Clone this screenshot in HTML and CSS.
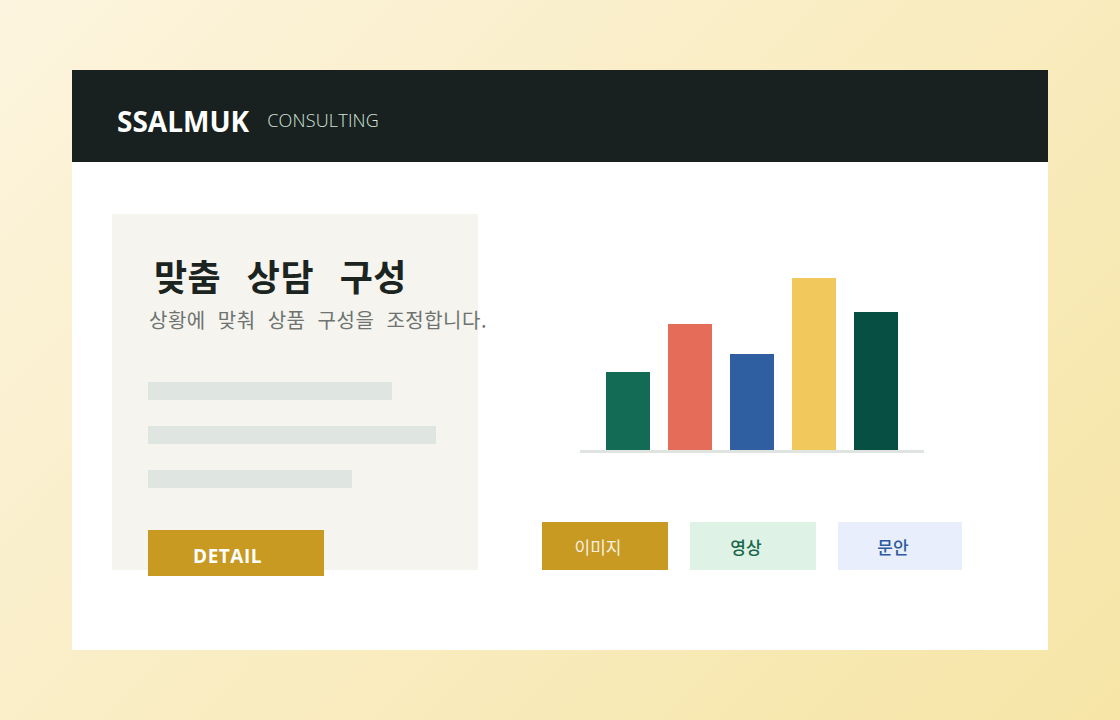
FILE: index.html
```html
<!DOCTYPE html>
<html lang="ko">
<head>
  <meta charset="UTF-8" />
  <title>SSALMUK Consulting</title>
  <link rel="stylesheet" href="styles.css">
</head>
<body>
  <div class="card">
    <header class="topbar">
      <h1 class="brand">SSALMUK</h1>
      <span class="tagline">CONSULTING</span>
    </header>
    <main class="content">
      <section class="panel">
        <h2 class="panel-title">맞춤 상담 구성</h2>
        <p class="panel-sub">상황에 맞춰 상품 구성을 조정합니다.</p>
        <div class="lines">
          <span class="line" style="width:244px"></span>
          <span class="line" style="width:288px"></span>
          <span class="line" style="width:204px"></span>
        </div>
        <a class="detail-btn" href="#">DETAIL</a>
      </section>
      <section class="side">
        <div class="chart">
          <span class="bar green" style="height:78px"></span>
          <span class="bar coral" style="height:126px"></span>
          <span class="bar blue" style="height:96px"></span>
          <span class="bar yellow" style="height:172px"></span>
          <span class="bar forest" style="height:138px"></span>
        </div>
        <div class="tabs">
          <button class="tab tab-image">이미지</button>
          <button class="tab tab-video">영상</button>
          <button class="tab tab-copy">문안</button>
        </div>
      </section>
    </main>
  </div>
</body>
</html>
```

FILE: styles.css
```css
/* Reset */
* {
  box-sizing: border-box;
  margin: 0;
  padding: 0;
}
body {
  font-family: "Open Sans", "Noto Sans CJK KR", sans-serif;
  background: linear-gradient(135deg, #fcf4de, #f6e5a6);
  min-height: 100vh;
  padding: 70px 72px;
}
.card {
  width: 976px;
  height: 580px;
  background: #fff;
}
/* Header bar */
.topbar {
  height: 92px;
  background: #182120;
  display: flex;
  align-items: center;
  padding: 8px 0 0 45px;
  gap: 18px;
}
.brand {
  color: #fff;
  font-size: 28px;
  font-weight: 700;
  line-height: 1;
  margin-top: 2px;
}
.tagline {
  color: #d3e4da;
  font-size: 18px;
  font-weight: 300;
  letter-spacing: 0.2px;
  line-height: 1;
}
/* Body */
.content {
  display: flex;
  padding: 52px 0 0 40px;
  gap: 64px;
}
.panel {
  width: 366px;
  height: 356px;
  background: #f5f4ef;
  padding-top: 38px;
  font-family: "Noto Sans CJK KR", sans-serif;
}
.panel-title {
  margin-left: 42px;
  font-size: 36px;
  font-weight: 700;
  line-height: 46px;
  color: #1b2420;
  letter-spacing: 0.5px;
  word-spacing: 15px;
}
.panel-sub {
  margin: 10px 0 0 37px;
  font-size: 20px;
  line-height: 24px;
  color: #6e7370;
  white-space: nowrap;
  letter-spacing: 0.5px;
  word-spacing: 6px;
}
.lines {
  display: flex;
  flex-direction: column;
  gap: 26px;
  margin: 50px 0 0 36px;
}
.line {
  display: block;
  height: 18px;
  background: #dfe5e1;
}
.detail-btn {
  display: flex;
  align-items: center;
  justify-content: center;
  width: 176px;
  height: 46px;
  margin: 42px 0 0 36px;
  padding: 5px 17px 0 0;
  background: #c89a22;
  color: #fff;
  font-family: "Open Sans", sans-serif;
  font-size: 19px;
  font-weight: 700;
  letter-spacing: 0.5px;
  text-decoration: none;
}
/* Chart */
.side {
  width: 420px;
  padding-top: 64px;
}
.chart {
  width: 344px;
  height: 175px;
  margin-left: 38px;
  display: flex;
  align-items: flex-end;
  gap: 18px;
  padding: 0 26px;
  border-bottom: 3px solid #e0e4e1;
}
.bar {
  display: block;
  width: 44px;
}
.green { background: #136b55; }
.coral { background: #e56c58; }
.blue { background: #2f5fa0; }
.yellow { background: #f1c85c; }
.forest { background: #074f42; }
/* Tabs */
.tabs {
  display: flex;
  gap: 22px;
  margin-top: 69px;
}
.tab {
  width: 126px;
  height: 48px;
  border: none;
  padding-right: 14px;
  font-family: "Noto Sans CJK KR", sans-serif;
  font-size: 17px;
  cursor: pointer;
}
.tab-image {
  background: #c89a22;
  color: #f7f1e2;
}
.tab-video {
  background: #dff2e6;
  color: #17664a;
  font-weight: 500;
}
.tab-copy {
  width: 124px;
  background: #e8eefb;
  color: #2d5aa0;
  font-weight: 500;
}
```
